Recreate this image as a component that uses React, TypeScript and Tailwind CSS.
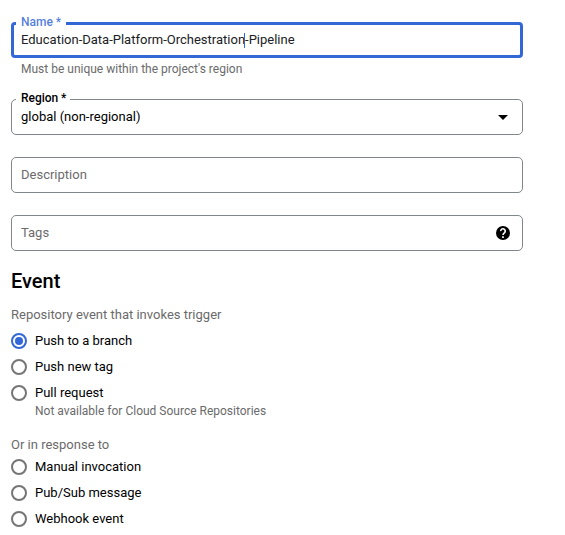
import type { ReactNode } from "react";

type FieldProps = {
  label?: ReactNode;
  active?: boolean;
  children: ReactNode;
};

function Field({ label, active, children }: FieldProps) {
  return (
    <div
      className={`relative flex h-9 w-full items-center ${
        active
          ? "rounded-[4px] border-[3px] border-[#3367d6] pr-2 pl-[7px]"
          : "rounded-[5px] border border-[#80868b] pr-3 pl-[9px]"
      }`}
    >
      {label}
      {children}
    </div>
  );
}

type OptionProps = { text: string; checked?: boolean };

function Option({ text, checked }: OptionProps) {
  return (
    <label className="flex h-[26px] items-center gap-2">
      <span
        className={`flex size-4 items-center justify-center rounded-full border-2 ${
          checked ? "border-[#3367d6]" : "border-[#757575]"
        }`}
      >
        {checked && <span className="size-2 rounded-full bg-[#3367d6]" />}
      </span>
      <span className="whitespace-nowrap text-[13px] leading-[26px] text-black">{text}</span>
    </label>
  );
}

export default function App() {
  return (
    <main className="h-[535px] w-[565px] overflow-hidden bg-white pt-[22px] pl-[11px] font-['Roboto',sans-serif] text-[13px] text-black">
      <form className="flex w-[512px] flex-col">
        <Field
          active
          label={
            <span className="absolute -top-[11px] left-[2px] h-4 w-[50px] bg-white pl-[5px] text-xs leading-4 font-medium whitespace-nowrap text-[#3367d6]/85">
              Name *
            </span>
          }
        >
          <span className="flex items-center whitespace-nowrap text-[#202124]">
            <span>Education-Data-Platform-Orchestration</span>
            <span className="-ml-px h-[15px] w-px bg-[#3367d6]" />
            <span>-Pipeline</span>
          </span>
        </Field>
        <p className="mt-[3px] h-4 pl-[10px] text-xs leading-4 text-[#6b6b6b]">
          Must be unique within the project's region
        </p>

        <div className="mt-[22px]">
          <Field
            label={
              <span className="absolute -top-[10px] left-[4px] h-4 w-[54px] bg-white pl-[5px] text-xs leading-4 font-medium tracking-[-0.05px] whitespace-nowrap">
                Region *
              </span>
            }
          >
            <span className="flex-1">global (non-regional)</span>
            <svg className="mr-[2px] h-[5px] w-[10px]" viewBox="0 0 10 5">
              <path d="M0 0h10L5 5z" />
            </svg>
          </Field>
        </div>

        <div className="mt-[22px]">
          <Field>
            <span className="text-[#6b6b6b]">Description</span>
          </Field>
        </div>
        <div className="mt-[22px]">
          <Field>
            <span className="flex-1 text-[#6b6b6b]">Tags</span>
            <svg className="size-[14px]" viewBox="2 2 20 20">
              <circle cx="12" cy="12" r="10" />
              <path
                d="M8.800 9.300a3.200 3.200 0 1 1 5.400 2.200c-1.300 1.200-2.200 1.700-2.200 3.500"
                fill="none"
                stroke="white"
                strokeWidth="2.300"
              />
              <path d="M10.800 16.800h2.400v2.400h-2.400z" fill="white" />
            </svg>
          </Field>
        </div>

        <h2 className="mt-[18px] h-6 text-xl leading-6 font-medium">Event</h2>

        <p className="mt-[14px] h-4 leading-4 text-[#6b6b6b]">Repository event that invokes trigger</p>
        <div className="mt-[5px]">
          <Option text="Push to a branch" checked />
          <Option text="Push new tag" />
          <Option text="Pull request" />
        </div>
        <p className="-mt-[3px] h-4 pl-6 text-xs leading-4 text-[#6b6b6b]">
          Not available for Cloud Source Repositories
        </p>

        <p className="mt-[18px] h-4 leading-4 text-[#6b6b6b]">Or in response to</p>
        <div className="mt-px">
          <Option text="Manual invocation" />
          <Option text="Pub/Sub message" />
          <Option text="Webhook event" />
        </div>
      </form>
    </main>
  );
}
